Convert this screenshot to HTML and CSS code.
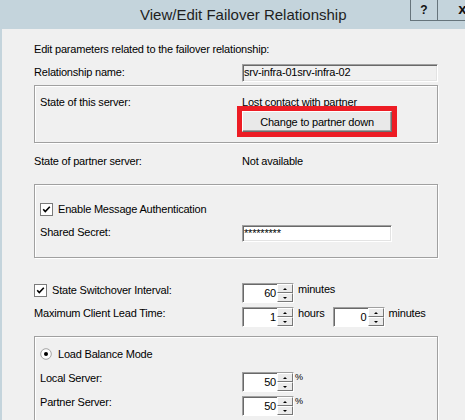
FILE: index.html
```html
<!DOCTYPE HTML>
<html>
  <head>
    <meta charset="UTF-8">
    <link rel="stylesheet" href="styles.css">
  </head>
  <body>
    <div class="window">
      <div class="titlebar">
        <div class="title">View/Edit Failover Relationship</div>
        <div class="capbtns">
          <div class="capbtn help">?</div>
          <div class="capbtn close">x</div>
        </div>
      </div>

      <div class="panel">
        <p class="intro">Edit parameters related to the failover relationship:</p>

        <div class="row namerow">
          <span class="lbl">Relationship name:</span>
          <div class="textbox readonly">srv-infra-01srv-infra-02</div>
        </div>

        <div class="group g1">
          <div class="row">
            <span>State of this server:</span>
            <div>
              <div>Lost contact with partner</div>
              <button type="button" class="btn marked">Change to partner down</button>
            </div>
          </div>
        </div>

        <div class="row partner">
          <span>State of partner server:</span>
          <span>Not available</span>
        </div>

        <div class="group g2">
          <div class="check">
            <svg class="cb" width="13" height="13" viewBox="0 0 13 13"><rect x="0.5" y="0.5" width="12" height="12" fill="#fff" stroke="#7a7a7a"/><path d="M3.2 6.2 L5.3 8.6 L9.8 3.8" fill="none" stroke="#000" stroke-width="1.6"/></svg>
            <span>Enable Message Authentication</span>
          </div>
          <div class="row secret">
            <span>Shared Secret:</span>
            <div class="textbox pass">*********</div>
          </div>
        </div>

        <div class="row spinrow switch">
          <div class="check">
            <svg class="cb" width="13" height="13" viewBox="0 0 13 13"><rect x="0.5" y="0.5" width="12" height="12" fill="#fff" stroke="#7a7a7a"/><path d="M3.2 6.2 L5.3 8.6 L9.8 3.8" fill="none" stroke="#000" stroke-width="1.6"/></svg>
            <span>State Switchover Interval:</span>
          </div>
          <div class="spins">
            <div class="spin"><span class="val">60</span><span class="arrows"><i class="up"></i><i class="dn"></i></span></div>
            <span class="unit">minutes</span>
          </div>
        </div>

        <div class="row spinrow maxlead">
          <span>Maximum Client Lead Time:</span>
          <div class="spins">
            <div class="spin"><span class="val">1</span><span class="arrows"><i class="up"></i><i class="dn"></i></span></div>
            <span class="unit">hours</span>
            <div class="spin second"><span class="val">0</span><span class="arrows"><i class="up"></i><i class="dn"></i></span></div>
            <span class="unit">minutes</span>
          </div>
        </div>

        <div class="group g3">
          <div class="check radio">
            <svg class="rb" width="12" height="12" viewBox="0 0 12 12"><circle cx="6" cy="6" r="5.3" fill="#fff" stroke="#a3a3a3"/><circle cx="6" cy="6" r="2" fill="#000"/></svg>
            <span>Load Balance Mode</span>
          </div>
          <div class="row spinrow local">
            <span>Local Server:</span>
            <div class="spins">
              <div class="spin"><span class="val">50</span><span class="arrows"><i class="up"></i><i class="dn"></i></span></div>
              <span class="unit pct">%</span>
            </div>
          </div>
          <div class="row spinrow partnersrv">
            <span>Partner Server:</span>
            <div class="spins">
              <div class="spin"><span class="val">50</span><span class="arrows"><i class="up"></i><i class="dn"></i></span></div>
              <span class="unit pct">%</span>
            </div>
          </div>
        </div>
      </div>
    </div>
  </body>
</html>
```

FILE: styles.css
```css
body {
  margin: 0;
  background: #c4d4dc;
  font-family: "Liberation Sans", Arial, sans-serif;
  font-size: 11px;
  letter-spacing: -0.2px;
  color: #000;
}
.window {
  width: 465px;
  height: 420px;
  overflow: hidden;
  display: flex;
  flex-direction: column;
}

/* title bar */
.titlebar {
  height: 29px;
  flex-shrink: 0;
  display: flex;
}
.title {
  margin-left: 140px;
  margin-top: 6px;
  font-size: 15px;
  line-height: 18px;
  letter-spacing: 0;
  color: #1e1e1e;
}
.capbtns {
  margin-left: auto;
  margin-right: -18px;
  display: flex;
  height: 21px;
}
.capbtn {
  box-sizing: border-box;
  height: 21px;
  border-left: 1px solid #66747b;
  border-bottom: 1px solid #66747b;
  text-align: center;
  font-weight: bold;
  letter-spacing: 0;
  color: #111;
}
.help {
  width: 27px;
  font-size: 12px;
  line-height: 20px;
}
.close {
  width: 46px;
  padding-left: 4px;
  font-size: 15px;
  line-height: 17px;
}

/* dialog body */
.panel {
  flex: 1;
  margin-left: 2px;
  background: #f0f0f0;
  padding: 13px 0 0 32px;
}
.intro {
  margin: 0;
  line-height: 14px;
}
.row {
  display: grid;
  grid-template-columns: 208px auto;
  align-items: start;
  line-height: 14px;
}
.group .row {
  grid-template-columns: 202px auto;
}
.namerow {
  margin-top: 8px;
}
.namerow .lbl {
  padding-top: 1px;
}
.textbox {
  box-sizing: border-box;
  height: 18px;
  width: 196px;
  padding: 0 1px;
  line-height: 14px;
  background: #fff;
  border: 1px solid;
  border-color: #a0a0a0 #fff #fff #a0a0a0;
  box-shadow: inset 1px 1px 0 #696969, inset -1px -1px 0 #e3e3e3;
}
.readonly {
  background: #f0f0f0;
}
.pass {
  width: 150px;
  height: 17px;
}

.group {
  box-sizing: border-box;
  width: 404px;
  border: 1px solid #a0a0a0;
  box-shadow: inset 1px 1px 0 #fff, 1px 1px 0 #fff;
  padding-left: 5px;
}
.g1 {
  margin-top: 3px;
  height: 58px;
  padding-top: 9px;
}
.btn {
  display: block;
  box-sizing: border-box;
  width: 150px;
  height: 21px;
  margin: 2px 0 0 0;
  padding: 0;
  font: inherit;
  letter-spacing: inherit;
  color: #000;
  background: #e9e9e9;
  border: 1px solid;
  border-color: #fff #6e6e6e #6e6e6e #fff;
  box-shadow: inset -1px -1px 0 #a0a0a0;
}
.marked {
  outline: 5px solid #ed1c24;
}
.partner {
  margin-top: 11px;
}

.g2 {
  margin-top: 16px;
  height: 74px;
  padding-top: 17px;
}
.check {
  display: flex;
  align-items: center;
  height: 14px;
  line-height: 14px;
}
.cb {
  margin-right: 5px;
  flex-shrink: 0;
}
.rb {
  margin-right: 6px;
  flex-shrink: 0;
}
.secret {
  margin-top: 9px;
}

/* spin boxes */
.spins {
  display: flex;
  align-items: flex-start;
}
.spin {
  box-sizing: border-box;
  width: 52px;
  height: 20px;
  display: flex;
  background: #fff;
  border: 1px solid;
  border-color: #a0a0a0 #fff #fff #a0a0a0;
  box-shadow: inset 1px 1px 0 #696969;
}
.val {
  flex: 1;
  text-align: right;
  line-height: 14px;
  padding: 2px 1px 0 0;
}
.arrows {
  width: 16px;
  display: flex;
  flex-direction: column;
}
.arrows i {
  flex: 1;
  box-sizing: border-box;
  display: flex;
  align-items: center;
  justify-content: center;
  background: #ebebeb;
  border: 1px solid;
  border-color: #fff #777 #777 #fff;
}
.up::after {
  content: "";
  border-left: 2px solid transparent;
  border-right: 2px solid transparent;
  border-bottom: 2px solid #000;
}
.dn::after {
  content: "";
  border-left: 2px solid transparent;
  border-right: 2px solid transparent;
  border-top: 2px solid #000;
}
.unit {
  margin-left: 4px;
  margin-top: -1px;
  line-height: 14px;
}
.pct {
  margin-left: 1px;
  font-size: 9px;
  line-height: 12px;
}
.second {
  margin-left: 8px;
}

.switch {
  margin-top: 25px;
}
.maxlead {
  margin-top: 4px;
}
.maxlead > span {
  margin-top: -1px;
}

.g3 {
  margin-top: 9px;
  height: 100px;
  padding-top: 10px;
}
.local {
  margin-top: 10px;
}
.partnersrv {
  margin-top: 3px;
}
.g3 .spins {
  margin-top: 1px;
}
```
